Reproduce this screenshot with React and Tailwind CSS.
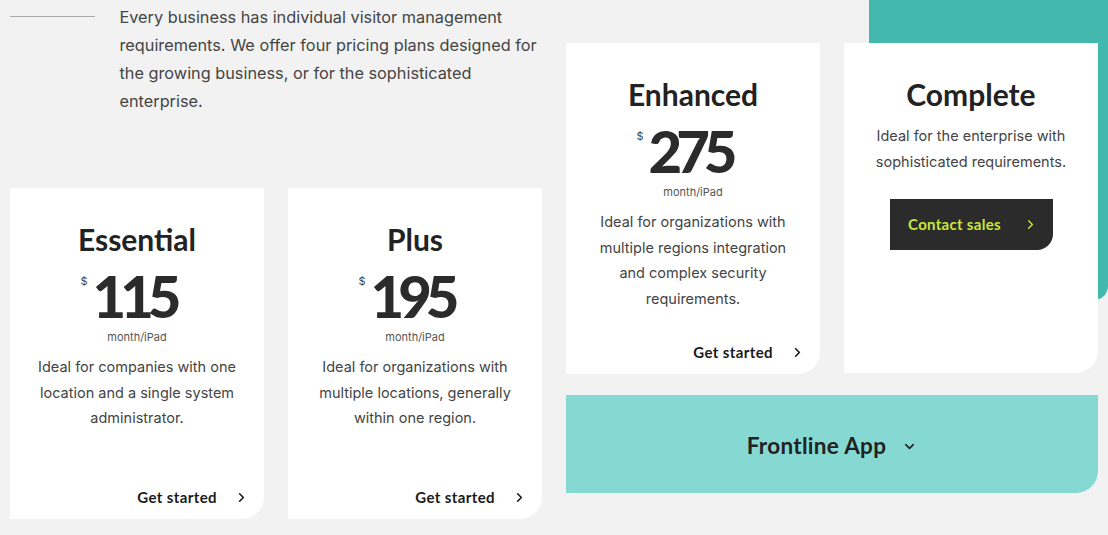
import React from "react";
import { ChevronRight, ChevronDown } from "lucide-react";

const head = { fontFamily: "Lato, 'Noto Sans', sans-serif" };
const body = { fontFamily: "Inter, 'Noto Sans', sans-serif" };

function PlanCard({ name, price, text }) {
  return (
    <div className="w-[254px] h-[331px] bg-white rounded-br-[22px] flex flex-col items-center">
      <h3 style={head} className="mt-[34px] text-[30px] leading-[34px] font-bold text-[#222]">
        {name}
      </h3>
      <div className="mt-[12px] mr-[18px] flex items-start">
        <span style={body} className="text-[11px] leading-[14px] text-[#444] mt-[6px] mr-[5px]">$</span>
        <span style={head} className="text-[58px] leading-[56px] font-black tracking-[-6px] text-[#2b2b2b]">
          {price}
        </span>
      </div>
      <div style={body} className="mt-[6px] text-[11px] leading-[14px] text-[#555]">month/iPad</div>
      <p style={body} className="mt-[10px] px-5 text-center text-[14.5px] leading-[25.5px] text-[#444]">
        {text}
      </p>
      <a style={head} className="mt-auto mb-[12px] self-end mr-[15px] flex items-center gap-[17px] text-[15px] leading-[20px] font-bold tracking-[0.4px] text-[#1a1a1a]">
        Get started
        <ChevronRight size={15} strokeWidth={2.6} />
      </a>
    </div>
  );
}

export default function App() {
  return (
    <div className="relative w-[1108px] h-[535px] overflow-hidden bg-[#f2f2f2]">
      <div className="absolute right-0 top-0 w-[239px] h-[300px] bg-[#43b9ad] rounded-br-[14px]" />
      <div className="relative flex gap-[24px] pl-[10px]">
        <div className="w-[532px] flex flex-col">
          <div className="h-[188px] flex pt-[3px]">
            <div className="w-[87px] h-px bg-[#aaa] mt-[13px]" />
            <p style={body} className="ml-[24px] w-[430px] text-[16.3px] leading-[28px] text-[#444]">
              Every business has individual visitor management requirements. We offer four pricing plans designed for the growing business, or for the sophisticated enterprise.
            </p>
          </div>
          <div className="flex gap-[24px]">
            <PlanCard name="Essential" price="115" text="Ideal for companies with one location and a single system administrator." />
            <PlanCard name="Plus" price="195" text="Ideal for organizations with multiple locations, generally within one region." />
          </div>
        </div>
        <div className="w-[532px] pt-[43px] flex flex-col">
          <div className="flex gap-[24px]">
            <div className="-mb-px">
              <PlanCard name="Enhanced" price="275" text="Ideal for organizations with multiple regions integration and complex security requirements." />
            </div>
            <div className="w-[254px] h-[330px] bg-white rounded-br-[22px] flex flex-col items-center">
              <h3 style={head} className="mt-[34px] text-[30px] leading-[34px] font-bold text-[#222]">
                Complete
              </h3>
              <p style={body} className="mt-[12px] px-5 text-center text-[14.5px] leading-[25.5px] text-[#444]">
                Ideal for the enterprise with sophisticated requirements.
              </p>
              <button style={head} className="mt-[25px] w-[163px] h-[51px] bg-[#2b2b2b] rounded-br-[16px] flex items-center justify-center gap-[22px] pl-[4px] text-[15px] font-bold tracking-[0.3px] text-[#c8e63c]">
                Contact sales
                <ChevronRight size={15} strokeWidth={2.2} />
              </button>
            </div>
          </div>
          <div className="mt-[22px] h-[98px] bg-[#86d9d3] rounded-br-[22px] flex items-center justify-center gap-[16px] pt-[4px]">
            <span style={head} className="text-[22.5px] font-bold tracking-[0.3px] text-[#222]">Frontline App</span>
            <ChevronDown size={15} strokeWidth={2.6} className="text-[#222]" />
          </div>
        </div>
      </div>
    </div>
  );
}
